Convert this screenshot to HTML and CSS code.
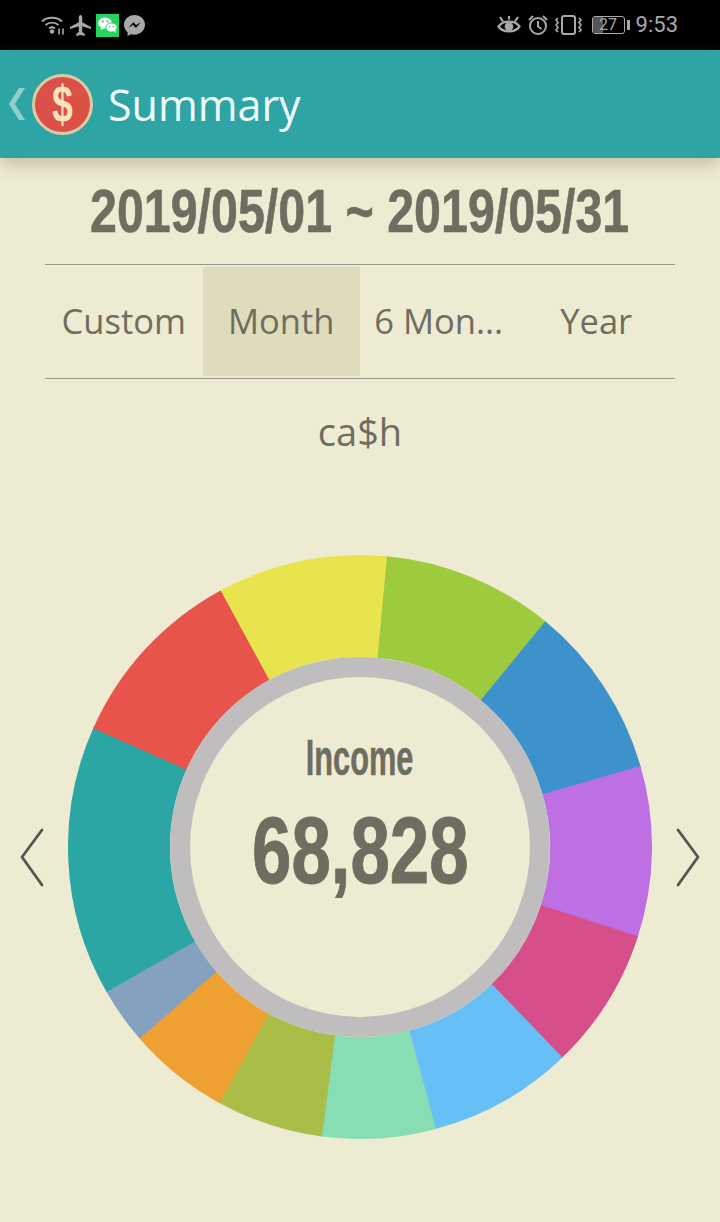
FILE: index.html
```html
<!DOCTYPE html>
<html lang="en">
<head>
<meta charset="utf-8">
<title>Summary</title>
<link rel="stylesheet" href="styles.css">
</head>
<body>
<div class="status">
  <div class="status-left">
    <svg class="ic-wifi" viewBox="0 0 24 20" width="24" height="20"><g fill="none" stroke="#a9a9a9" stroke-width="1.8"><path d="M1 6.500C6 1.500 16 1.500 21 6.500"/><path d="M4.500 10C8 6.700 14 6.700 17.500 10"/><path d="M8 13.500C9.800 12 12.200 12 14 13.500"/></g><circle cx="11" cy="16.500" r="2.200" fill="#a9a9a9"/><path d="M18 13.500v6M22 13.500v6" stroke="#a9a9a9" stroke-width="1.600"/></svg>
    <svg viewBox="0 0 22 22" width="21" height="21"><path fill="#a9a9a9" d="M11 0c1.200 0 1.800 1.500 1.800 3v4.500L22 12.500v2.200l-9.200-3v6l2.700 2.100V22L11 21l-4.500 1v-2.200l2.700-2.100v-6L0 14.700v-2.200l9.200-5V3C9.200 1.500 9.800 0 11 0z"/></svg>
    <svg class="ic-wechat" viewBox="0 0 23 23" width="23" height="23"><rect width="23" height="23" fill="#25d35f"/><ellipse cx="9" cy="9" rx="6.800" ry="5.600" fill="#fff"/><path d="M5 12.500v3.500l3.500-2z" fill="#fff"/><ellipse cx="15.500" cy="13.500" rx="5.600" ry="4.600" fill="#fff" stroke="#25d35f"/><path d="M18 17l1.500 2.500v-3.500z" fill="#fff"/><circle cx="6.800" cy="7.500" r="1" fill="#25d35f"/><circle cx="11.200" cy="7.500" r="1" fill="#25d35f"/><circle cx="13.700" cy="12.500" r=".8" fill="#25d35f"/><circle cx="17.300" cy="12.500" r=".8" fill="#25d35f"/></svg>
    <svg viewBox="0 0 22 22" width="21" height="21"><path fill="#a9a9a9" d="M11 0C5 0 0 4.500 0 10.300c0 3.100 1.400 5.800 3.700 7.700V22l3.500-1.900c1.200.3 2.500.5 3.800.5 6 0 11-4.500 11-10.300S17 0 11 0z"/><path fill="#000" d="M4.500 13.500l5.300-6 2.900 3 5-3-5.300 6-2.900-3z"/></svg>
  </div>
  <div class="status-right">
    <svg viewBox="0 0 24 20" width="24" height="20"><g fill="none" stroke="#a9a9a9" stroke-width="2.200"><path d="M1.500 11.500C6 5 18 5 22.500 11.500C18 18 6 18 1.500 11.500z"/><path d="M3 2l3 4.500M21 2l-3 4.500M12 1v3.500"/></g><circle cx="12" cy="11.500" r="4.300" fill="#a9a9a9"/></svg>
    <svg viewBox="0 0 20 20" width="20" height="20"><g fill="none" stroke="#a9a9a9" stroke-width="2"><circle cx="10" cy="11" r="8"/><path d="M10 6v5.500l3.500 2.500"/><path d="M1 5l4-4M19 5l-4-4"/></g></svg>
    <svg viewBox="0 0 27 20" width="27" height="20"><rect x="7" y="1" width="13" height="18" rx="2" fill="none" stroke="#a9a9a9" stroke-width="2"/><path d="M3 3l-2 2 2 2.500-2 2.500 2 2.500-2 2.500 2 2M24 3l2 2-2 2.500 2 2.500-2 2.500 2 2.500-2 2" fill="none" stroke="#a9a9a9" stroke-width="1.700"/></svg>
    <div class="battery"><div class="battery-body"><span class="battery-fill"></span><span class="battery-num">27</span></div><span class="battery-tip"></span></div>
    <span class="clock">9:53</span>
  </div>
</div>
<header class="appbar">
  <svg class="back" viewBox="0 0 16 32" width="16" height="32"><polygon points="10,0 16,0 6,16 16,32 10,32 0,16" fill="#8ed0ce"/></svg>
  <div class="logo"><span class="logo-mark">$</span></div>
  <h1 class="title">Summary</h1>
</header>
<main class="content">
  <div class="range"><span class="range-text">2019/05/01 ~ 2019/05/31</span></div>
  <nav class="tabs">
    <div class="tab">Custom</div>
    <div class="tab tab-active">Month</div>
    <div class="tab">6 Mon...</div>
    <div class="tab">Year</div>
  </nav>
  <div class="account">ca$h</div>
  <section class="chart-row">
    <svg class="arrow arrow-left" viewBox="0 0 24 60" width="24" height="60"><path d="M22 2L2 29L22 57" fill="none" stroke="#555550" stroke-width="2.800" stroke-linecap="round" stroke-linejoin="round"/></svg>
    <div class="donut">
      <svg viewBox="-292 -292 584 584" width="584" height="584">
        <g fill="none" stroke-width="102">
          <circle r="241" pathLength="360" stroke="#e8e44e" stroke-dasharray="34.4 360" transform="rotate(-118.8)"/>
          <circle r="241" pathLength="360" stroke="#9ecb3e" stroke-dasharray="34.4 360" transform="rotate(-84.7)"/>
          <circle r="241" pathLength="360" stroke="#3e92cc" stroke-dasharray="34.7 360" transform="rotate(-50.6)"/>
          <circle r="241" pathLength="360" stroke="#bc70e4" stroke-dasharray="34.2 360" transform="rotate(-16.1)"/>
          <circle r="241" pathLength="360" stroke="#d64f8a" stroke-dasharray="28.6 360" transform="rotate(17.800)"/>
          <circle r="241" pathLength="360" stroke="#66bff5" stroke-dasharray="29.1 360" transform="rotate(46.100)"/>
          <circle r="241" pathLength="360" stroke="#87ddb4" stroke-dasharray="22.9 360" transform="rotate(74.900)"/>
          <circle r="241" pathLength="360" stroke="#a9bd47" stroke-dasharray="21.5 360" transform="rotate(97.500)"/>
          <circle r="241" pathLength="360" stroke="#eea033" stroke-dasharray="20.6 360" transform="rotate(118.700)"/>
          <circle r="241" pathLength="360" stroke="#84a2c0" stroke-dasharray="11.5 360" transform="rotate(139)"/>
          <circle r="241" pathLength="360" stroke="#2ca5a5" stroke-dasharray="54.1 360" transform="rotate(150.200)"/>
          <circle r="241" pathLength="360" stroke="#e8534b" stroke-dasharray="37.5 360" transform="rotate(204)"/>
        </g>
        <circle r="180" fill="#eeebd3" stroke="#bfbdbd" stroke-width="20"/>
      </svg>
      <div class="donut-label">
        <div class="donut-caption"><span class="squeeze squeeze-caption">Income</span></div>
        <div class="donut-value"><span class="squeeze squeeze-value">68,828</span></div>
      </div>
    </div>
    <svg class="arrow arrow-right" viewBox="0 0 24 60" width="24" height="60"><path d="M2 2L22 29L2 57" fill="none" stroke="#555550" stroke-width="2.800" stroke-linecap="round" stroke-linejoin="round"/></svg>
  </section>
</main>
</body>
</html>
```
FILE: styles.css
```css
* { box-sizing: border-box; }
html, body { margin: 0; padding: 0; }
body {
  width: 720px;
  height: 1222px;
  overflow: hidden;
  background: #eeebd3;
  color: #6e6e60;
  font-family: "Open Sans", "Noto Sans", sans-serif;
}
.status {
  height: 50px;
  background: #000;
  display: flex;
  align-items: center;
  justify-content: space-between;
  padding: 0 42px 0 41px;
}
.status-left { display: flex; align-items: center; gap: 5px; }
.status-right { display: flex; align-items: center; gap: 7px; }
.battery { display: flex; align-items: center; gap: 2px; margin-left: 3px; }
.battery-body {
  position: relative;
  width: 33px;
  height: 18px;
  border: 1.500px solid #a9a9a9;
  border-radius: 3px;
  display: flex;
  align-items: center;
  justify-content: center;
}
.battery-fill {
  position: absolute;
  left: 0; top: 0; bottom: 0;
  width: 10px;
  background: #555;
}
.battery-num {
  position: relative;
  color: #a9a9a9;
  font: 16px/1 Roboto, sans-serif;
}
.battery-tip { width: 3px; height: 10px; background: #a9a9a9; }
.clock { color: #a9a9a9; font: 22px/1 Roboto, sans-serif; margin-left: -1px; }
.appbar {
  position: relative;
  height: 108px;
  background: #2ea4a4;
  display: flex;
  align-items: center;
  padding-left: 9px;
  box-shadow: 0 6px 16px rgba(90, 90, 60, .3);
}
.back { margin-right: 7px; flex: none; }
.logo {
  width: 61px;
  height: 61px;
  border-radius: 50%;
  background: #dc5147;
  border: 3px solid #d9cca6;
  display: flex;
  align-items: center;
  justify-content: center;
}
.logo-mark {
  display: inline-block;
  color: #f7e3bd;
  font: bold 52px/1 "Liberation Sans", sans-serif;
  transform: scaleX(.72);
}
.title {
  margin: 0 0 0 15px;
  color: #eefafa;
  font-weight: 400;
  font-size: 43px;
  line-height: 1;
}
.content { display: flex; flex-direction: column; }
.range {
  height: 106px;
  display: flex;
  align-items: center;
  justify-content: center;
}
.range-text {
  display: inline-block;
  white-space: nowrap;
  font: bold 62px/1 "Liberation Sans", sans-serif;
  -webkit-text-stroke: .6px #6e6e60;
  transform: scaleX(.78);
}
.tabs {
  margin: 0 45px;
  height: 115px;
  padding: 2px 0;
  border-top: 1px solid #9a9a8c;
  border-bottom: 1px solid #9a9a8c;
  display: grid;
  grid-template-columns: repeat(4, 1fr);
}
.tab {
  display: flex;
  align-items: center;
  justify-content: center;
  font-size: 34.5px;
  padding-bottom: 2px;
}
.tab-active { background: #dedcbc; }
.account {
  height: 110px;
  padding-bottom: 7px;
  display: flex;
  align-items: center;
  justify-content: center;
  font-size: 38px;
}
.chart-row {
  margin-top: 66px;
  height: 584px;
  display: flex;
  align-items: center;
  justify-content: space-between;
  padding: 0 20px;
}
.arrow { flex: none; margin-top: 22px; }
.donut {
  position: relative;
  width: 584px;
  height: 584px;
}
.donut svg { display: block; }
.donut-label {
  position: absolute;
  inset: 0;
  padding-top: 178px;
  display: flex;
  flex-direction: column;
  align-items: center;
  gap: 19px;
  font-family: "Liberation Sans", sans-serif;
  font-weight: bold;
}
.squeeze { display: inline-block; white-space: nowrap; }
.squeeze-caption { transform: scaleX(.615); -webkit-text-stroke: .5px #6e6e60; }
.squeeze-value { transform: scaleX(.745); -webkit-text-stroke: 1px #6e6e60; }
.donut-caption { font-size: 50px; line-height: 50px; }
.donut-value { font-size: 95px; line-height: 96px; }
```
